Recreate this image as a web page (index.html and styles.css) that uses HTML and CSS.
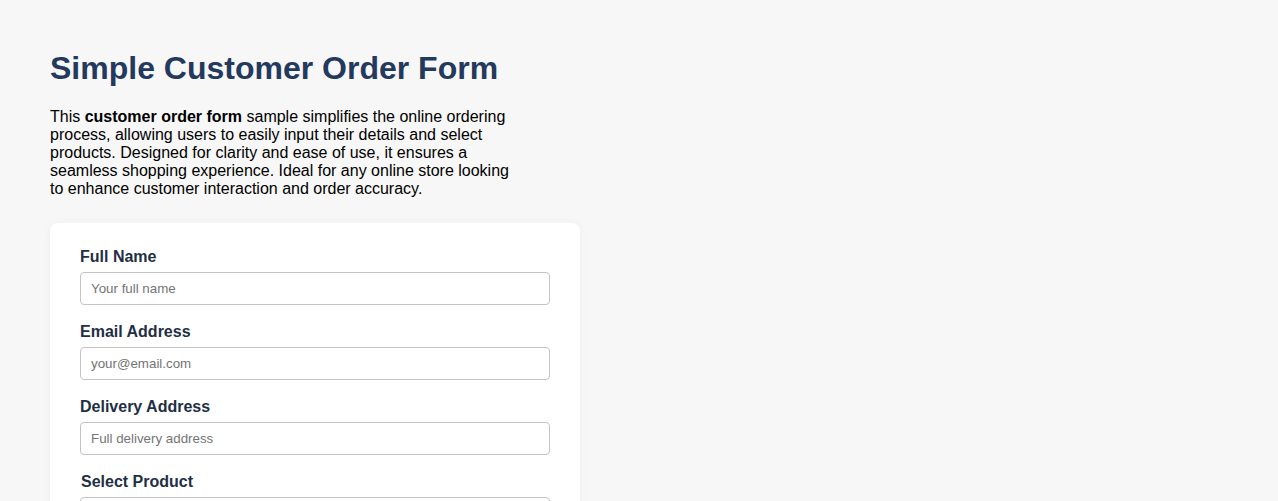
FILE: index.html
```html
<!DOCTYPE html>
<html lang="en">
<head>
<meta charset="utf-8">
<title>Simple Customer Order Form</title>
<link rel="stylesheet" href="styles.css">
</head>
<body>
<main class="page">
  <h1 class="title">Simple Customer Order Form</h1>
  <p class="intro">This <strong>customer order form</strong> sample simplifies the online ordering process, allowing users to easily input their details and select products. Designed for clarity and ease of use, it ensures a seamless shopping experience. Ideal for any online store looking to enhance customer interaction and order accuracy.</p>
  <form class="card">
    <div class="group">
      <label class="label" for="name">Full Name</label>
      <input class="field" id="name" type="text" placeholder="Your full name">
    </div>
    <div class="group">
      <label class="label" for="email">Email Address</label>
      <input class="field" id="email" type="email" placeholder="your@email.com">
    </div>
    <div class="group">
      <label class="label" for="addr">Delivery Address</label>
      <input class="field" id="addr" type="text" placeholder="Full delivery address">
    </div>
    <div class="group">
      <label class="label label-shift" for="product">Select Product</label>
      <select class="field" id="product">
        <option>-- Choose a product --</option>
      </select>
    </div>
    <div class="group">
      <label class="label" for="qty">Quantity</label>
      <input class="field" id="qty" type="number" placeholder="1">
    </div>
  </form>
</main>
</body>
</html>
```

FILE: styles.css
```css
html, body {
  margin: 0;
  padding: 0;
  background: #f7f7f7;
}

body {
  font-family: "Liberation Sans", Arial, sans-serif;
  color: #000;
}

.page {
  padding: 50px 50px 40px;
}

.title {
  margin: 0 0 21px;
  font-size: 32px;
  line-height: 37px;
  font-weight: bold;
  color: #233a5e;
}

.intro {
  margin: 0 0 25px;
  max-width: 465px;
  font-size: 16px;
  line-height: 18px;
}

.card {
  width: 530px;
  box-sizing: border-box;
  background: #fff;
  border-radius: 8px;
  padding: 24px 30px;
  box-shadow: 0 2px 10px rgba(0, 0, 0, 0.05);
}

.group {
  margin-bottom: 17px;
}

.label {
  display: block;
  font-size: 16px;
  line-height: 19px;
  font-weight: bold;
  color: #1f2f45;
  margin-bottom: 6px;
}

.label-shift {
  padding-left: 1px;
}

.field {
  display: block;
  width: 100%;
  height: 33px;
  box-sizing: border-box;
  border: 1px solid #c4c4c4;
  border-radius: 4px;
  padding: 0 10px;
  font-family: "Liberation Sans", Arial, sans-serif;
  font-size: 13.333px;
  color: #222;
  background: #fff;
}

.field::placeholder {
  color: #757575;
}
```
